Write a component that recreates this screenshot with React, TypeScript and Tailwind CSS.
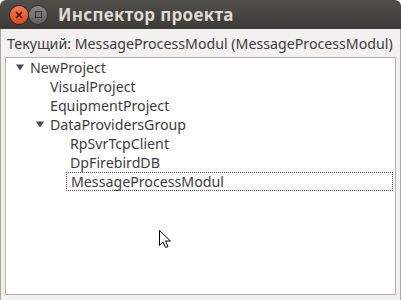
import * as React from 'react';

type Node = { label: string; depth: number; expanded?: boolean; focused?: boolean };

const rows: Node[] = [
  { label: 'NewProject', depth: 0, expanded: true },
  { label: 'VisualProject', depth: 1 },
  { label: 'EquipmentProject', depth: 1 },
  { label: 'DataProvidersGroup', depth: 1, expanded: true },
  { label: 'RpSvrTcpClient', depth: 2 },
  { label: 'DpFirebirdDB', depth: 2 },
  { label: 'MessageProcessModul', depth: 2, focused: true },
];

const indent = ['pl-[10px]', 'pl-[30px]', 'pl-[50px]'];

function TreeRow({ node }: { node: Node }) {
  return (
    <div className={`flex h-[19px] items-center ${indent[node.depth]}`}>
      <span className="flex w-[14px] items-center">
        {node.expanded && (
          <svg width="8" height="7" viewBox="0 0 8 7">
            <path d="M0 0.5h8L4 6.5z" fill="#4c4c4c" />
          </svg>
        )}
      </span>
      <span
        className={
          node.focused
            ? 'ml-[-4px] mr-[2px] flex h-[19px] flex-1 items-center border border-dotted border-[#555] pl-[4px]'
            : ''
        }
      >
        {node.label}
      </span>
    </div>
  );
}

export default function App() {
  return (
    <div
      className="relative h-[300px] w-[401px] overflow-hidden rounded-t-[6px] bg-[#f2f1f0] text-[#3c3c3c]"
      style={{ fontFamily: '"Noto Sans", "DejaVu Sans", sans-serif' }}
    >
      <div className="flex h-[29px] items-center bg-gradient-to-b from-[#504f4a] to-[#3c3b37] pl-[10px]">
        <div className="flex h-[18px] w-[18px] items-center justify-center rounded-full bg-gradient-to-b from-[#f7784b] to-[#df4a16] shadow-[0_0_0_1px_#3a2a22]">
          <svg width="8" height="8" viewBox="0 0 8 8">
            <path d="M1 1l6 6M7 1l-6 6" stroke="#3a1a0c" strokeWidth="1.6" />
          </svg>
        </div>
        <div className="ml-[1px] flex h-[18px] w-[18px] items-center justify-center rounded-full bg-gradient-to-b from-[#8a8985] to-[#5e5d59] shadow-[0_0_0_1px_#33322e]">
          <div className="h-[7px] w-[7px] border-[1.5px] border-[#3a3935]" />
        </div>
        <span className="ml-[11px] text-[17px] font-bold tracking-[0.3px] text-[#dfdbd2]">Инспектор проекта</span>
      </div>
      <div className="flex h-[299px] flex-col border-x border-b border-[#a8a7a3]">
        <div className="whitespace-nowrap px-[6px] pt-[4px] text-[14.2px] leading-[21px]">
          Текущий: MessageProcessModul (MessageProcessModul)
        </div>
        <div className="mx-[4px] mt-[3px] h-[238px] border border-[#b3b2ae] bg-white text-[14.2px]">
          {rows.map((r) => (
            <TreeRow key={r.label} node={r} />
          ))}
        </div>
      </div>
      <svg className="absolute left-[159px] top-[230px]" width="13" height="20" viewBox="0 0 13 20">
        <path
          d="M0.5 0.5v15l3.5-3.5 2.5 5.5 2.5-1-2.5-5.5h5z"
          fill="white"
          stroke="black"
          strokeWidth="1"
          strokeLinejoin="round"
        />
      </svg>
    </div>
  );
}
